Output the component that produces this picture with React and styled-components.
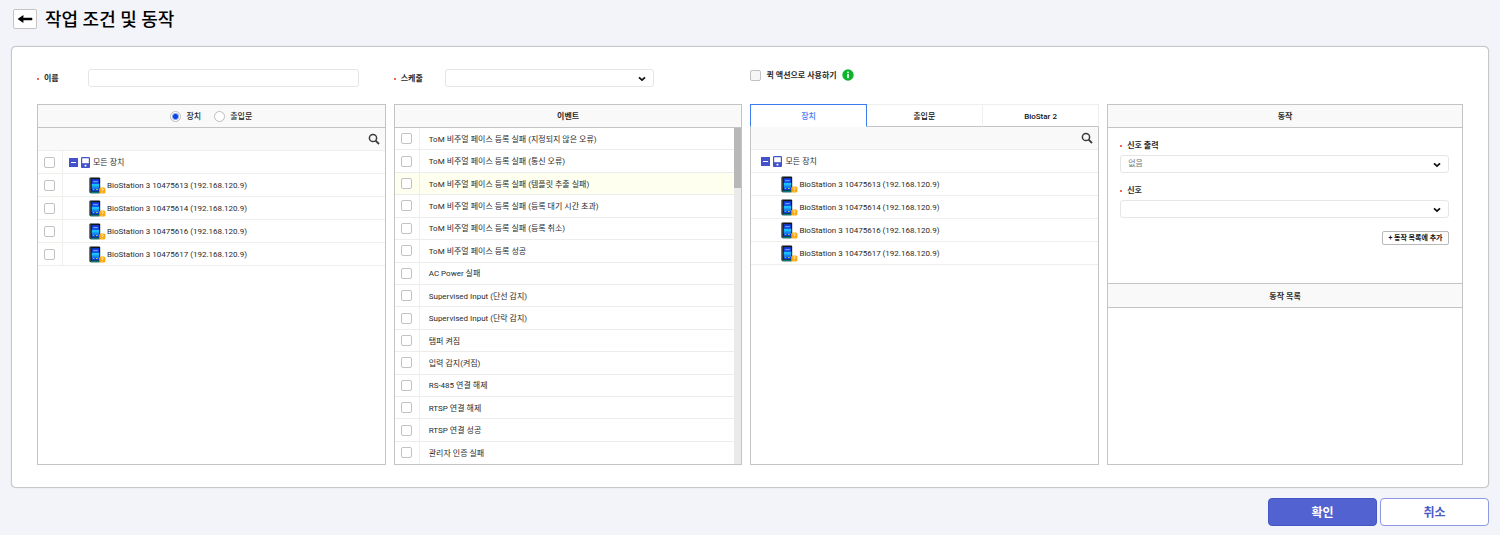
import React, { useState } from "react";
import styled, { createGlobalStyle, css } from "styled-components";

const line = "#c4c4c4";
const soft = "#eeeeea";
const blue = "#4d5ecf";

const GlobalStyle = createGlobalStyle`
  * { box-sizing: border-box; }
  body { margin: 0; background: #f3f4f9; color: #2a2a2a; }
  body, button, input, select {
    font-family: Roboto, "Noto Sans CJK KR", sans-serif;
    font-size: 8px;
    line-height: 12px;
  }
`;

const Page = styled.div`
  min-height: 100vh;
  display: flex;
  flex-direction: column;
  padding: 8px 11px 9px;
`;

const Header = styled.header`
  display: flex;
  align-items: center;
  gap: 8px;
  height: 21px;
  padding-left: 2px;
`;

const BackButton = styled.button`
  display: grid;
  place-items: center;
  width: 24px;
  height: 20px;
  padding: 0;
  border: 1px solid #c4c4c4;
  border-radius: 2px;
  background: #fff;
`;

const Title = styled.h1`
  margin: 0;
  padding-top: 2px;
  font-size: 18px;
  line-height: 24px;
  font-weight: 500;
  color: #000;
`;

const Card = styled.main`
  flex: 1;
  display: flex;
  flex-direction: column;
  gap: 17px;
  margin-top: 17px;
  padding: 22px 25px 22px;
  background: #fff;
  border: 1px solid #c8c8ca;
  border-radius: 5px;
  box-shadow: 0 0 1px #b4b4b6;
`;

const columns = css`
  display: grid;
  grid-template-columns: repeat(3, minmax(0, 49fr)) minmax(0, 50fr);
  column-gap: 8px;
`;

const FormRow = styled.div`
  ${columns}
`;

const Panels = styled.div`
  ${columns}
  flex: 1;
`;

const Field = styled.div`
  display: grid;
  grid-template-columns: 51px minmax(0, 1fr);
  align-items: center;
  padding-right: ${(p) => p.$end}px;
`;

const Label = styled.label`
  display: flex;
  align-items: center;
  gap: 5px;
  padding-top: 2px;
  font-weight: 700;

  &::before {
    content: "";
    width: 2px;
    height: 2px;
    border-radius: 1px;
    background: #f4301f;
  }
`;

const TextInput = styled.input`
  width: 100%;
  height: 18px;
  padding: 0 8px;
  border: 1px solid #e6e6e6;
  border-radius: 3px;
`;

const SelectWrap = styled.div`
  position: relative;
  height: 18px;

  svg {
    position: absolute;
    right: 8px;
    top: 6px;
    pointer-events: none;
  }
`;

const Select = styled.select`
  display: block;
  appearance: none;
  width: 100%;
  height: 18px;
  padding: 0 7px;
  border: 1px solid #e6e6e6;
  border-radius: 3px;
  background: #fff;
  color: #777;
`;

const QuickAction = styled.div`
  display: flex;
  align-items: center;
  align-self: start;
  gap: 5px;
  height: 12px;
  font-weight: 700;
`;

const CheckBox = styled.input.attrs({ type: "checkbox" })`
  appearance: none;
  flex: none;
  width: 11px;
  height: 11px;
  margin: 0;
  border: 1px solid #c2c2c2;
  border-radius: 2px;
  background: ${(p) => (p.$muted ? "#f6f6f6" : "#fff")};

  &:checked { background: ${blue}; }
`;

const Panel = styled.section`
  display: flex;
  flex-direction: column;
  min-width: 0;
  border: 1px solid ${line};
`;

const PanelHead = styled.h2`
  display: flex;
  align-items: center;
  justify-content: center;
  height: 23px;
  margin: 0;
  padding-top: 2px;
  background: #f9f9f9;
  border-bottom: 1px solid ${line};
  font-size: 8px;
  line-height: 12px;
  font-weight: 700;
`;

const RadioGroup = styled.div`
  display: flex;
  align-items: center;
  justify-content: center;
  gap: 13px;
  height: 23px;
  background: #f9f9f9;
  border-bottom: 1px solid ${line};
`;

const RadioLabel = styled.label`
  display: flex;
  align-items: center;
  gap: 5px;
  font-weight: 500;
`;

const Name = styled.span`
  padding-top: 2px;
`;

const Radio = styled.input.attrs({ type: "radio" })`
  appearance: none;
  width: 11px;
  height: 11px;
  margin: 0;
  border: 1px solid #bdbdbd;
  border-radius: 50%;
  background: #fff;

  &:checked {
    background: radial-gradient(circle, #0a45e0 0 2px, #fff 4px);
  }
`;

const SearchBar = styled.div`
  display: flex;
  align-items: center;
  justify-content: flex-end;
  height: 23px;
  padding-right: 5px;
  background: #f9f9f9;
  border-bottom: 1px solid ${soft};
`;

const IconButton = styled.button`
  display: grid;
  place-items: center;
  width: 12px;
  height: 12px;
  padding: 0;
  border: 0;
  background: none;
`;

const List = styled.ul`
  margin: 0;
  padding: 0;
  list-style: none;
`;

const TreeRow = styled.li`
  display: flex;
  height: 23px;
  border-bottom: 1px solid ${soft};
`;

const CheckCell = styled.div`
  display: grid;
  place-items: center;
  flex: none;
  width: 25px;
  padding-right: ${(p) => (p.$tree ? 2 : 0)}px;
  border-right: 1px solid ${soft};
`;

const TreeLabel = styled.label`
  display: flex;
  align-items: center;
  gap: ${(p) => (p.$child ? 1 : 3)}px;
  padding-left: ${(p) => (p.$child ? 26 : 6)}px;
`;

const TreeBody = styled.div`
  display: flex;
  padding-left: ${(p) => (p.$flush ? 4 : 0)}px;
`;

const EventBody = styled.div`
  flex: 1;
  display: flex;
`;

const EventList = styled(List)`
  flex: 1;
  display: flex;
  flex-direction: column;
`;

const EventRow = styled.li`
  flex: 1;
  display: flex;
  min-height: 22px;
  background: ${(p) => (p.$active ? "#fffff0" : "#fff")};
  border-bottom: 1px solid #ececec;

  &:last-child { border-bottom: 0; }
`;

const EventLabel = styled.label`
  display: flex;
  align-items: center;
  padding-left: 9px;
`;

const ScrollTrack = styled.div`
  width: 7px;
  background: #ebe9e9;
`;

const ScrollThumb = styled.div`
  height: 60px;
  background: #b8b8b8;
`;

const TabPanel = styled.section`
  display: flex;
  flex-direction: column;
  min-width: 0;
`;

const Tabs = styled.div`
  display: grid;
  grid-template-columns: repeat(3, 1fr);
  height: 23px;
`;

const Tab = styled.button`
  padding: 2px 0 0;
  font-weight: 500;
  color: #111;
  background: #fff;
  border: 1px solid #eee;
  border-left: 0;
  border-bottom-color: ${line};

  &[aria-selected="true"] {
    color: #3c7cf0;
    border: 1px solid #3c7cf0;
    border-bottom-color: #fff;
  }
`;

const TabContent = styled.div`
  flex: 1;
  border: 1px solid ${line};
  border-top: 0;
`;

const ActionForm = styled.div`
  display: flex;
  flex-direction: column;
  height: 155px;
  padding: 10px 13px 10px 12px;
`;

const StackedField = styled.div`
  display: flex;
  flex-direction: column;
  gap: 3px;
  margin-bottom: 10px;
`;

const AddButton = styled.button`
  align-self: flex-end;
  width: 67px;
  height: 14px;
  margin-top: 3px;
  padding: 0;
  border: 1px solid #b9b9b9;
  border-radius: 2px;
  background: #fff;
  color: #111;
  font-size: 7px;
  line-height: 12px;
  font-weight: 700;
  white-space: nowrap;
`;

const ActionList = styled.div`
  flex: 1;
`;

const ListHead = styled(PanelHead)`
  height: 25px;
  border-top: 1px solid ${line};
`;

const Footer = styled.footer`
  display: flex;
  justify-content: flex-end;
  gap: 3px;
  margin-top: 10px;
`;

const FooterButton = styled.button`
  width: 109px;
  height: 28px;
  padding: 2px 0 0;
  border: 1px solid ${(p) => (p.$primary ? "#4655c4" : "#8c98e2")};
  border-radius: 4px;
  background: ${(p) => (p.$primary ? "#5262d0" : "#fff")};
  color: ${(p) => (p.$primary ? "#fff" : "#4a59c8")};
  font-size: 12px;
  line-height: 16px;
  font-weight: 700;
`;

const BackIcon = () => (
  <svg width="16" height="10" viewBox="0 0 16 10" aria-hidden="true">
    <path d="M6.4 1 L0.6 5 L6.4 9 V6.2 H14.4 Q15.4 6.2 15.4 5 Q15.4 3.8 14.4 3.8 H6.4 Z" fill="#000" />
  </svg>
);

const Chevron = () => (
  <svg width="8" height="8" viewBox="0 0 8 8" aria-hidden="true">
    <path d="M1 2.3 L4 5.1 L7 2.3" fill="none" stroke="#111" strokeWidth="1.8" />
  </svg>
);

const SearchIcon = () => (
  <svg width="12" height="12" viewBox="0 0 12 12" aria-hidden="true">
    <circle cx="5" cy="5" r="3.6" fill="none" stroke="#3c3c3c" strokeWidth="1.5" />
    <path d="M7.6 7.6 L11 11" stroke="#3c3c3c" strokeWidth="1.8" />
  </svg>
);

const InfoIcon = () => (
  <svg width="12" height="12" viewBox="0 0 12 12" role="img" aria-label="정보">
    <circle cx="6" cy="6" r="5.7" fill="#0cb52c" />
    <circle cx="6" cy="3.3" r="0.9" fill="#fff" />
    <rect x="5.2" y="4.9" width="1.6" height="4.3" fill="#fff" />
  </svg>
);

const CollapseIcon = () => (
  <svg width="9" height="9" viewBox="0 0 9 9" aria-hidden="true">
    <rect width="9" height="9" fill="#4453cb" />
    <rect x="2" y="4" width="5" height="1" fill="#fff" />
  </svg>
);

const GroupIcon = () => (
  <svg width="9" height="11" viewBox="0 0 9 11" aria-hidden="true">
    <rect x="0.6" y="0.6" width="7.8" height="9.8" rx="0.6" fill="#fff" stroke="#4453cb" strokeWidth="1.2" />
    <rect x="0.5" y="6.2" width="8" height="4.3" fill="#4453cb" />
    <rect x="3.6" y="7.8" width="1.8" height="1.7" fill="#fff" />
  </svg>
);

const DeviceIcon = () => (
  <svg width="17" height="17" viewBox="0 0 17 17" aria-hidden="true">
    <rect x="0.6" y="0.4" width="10.6" height="15.8" rx="1.2" fill="#101418" />
    <rect x="0.6" y="0.8" width="1.6" height="15" rx="0.8" fill="#3a3f44" />
    <rect x="2.8" y="2.2" width="7.4" height="12" fill="#1240e0" />
    <rect x="2.8" y="6.8" width="7.4" height="3" fill="#18c0f8" />
    <rect x="2.8" y="9.8" width="7.4" height="2" fill="#1a86f0" />
    <rect x="4.2" y="4" width="4.6" height="1.2" fill="#6e9cf6" />
    <rect x="3.8" y="12" width="1.4" height="1" fill="#36e0d0" />
    <rect x="7.2" y="12" width="1.4" height="1" fill="#c8e84a" />
    <rect x="1.6" y="14.6" width="9" height="1.6" fill="#0c7a7a" />
    <rect x="10.2" y="10.4" width="6.2" height="6.2" rx="1.6" fill="#fba80c" />
    <path d="M12 12.3 Q13.2 11.1 14.2 12.1 Q14.6 13 13.2 13.7 V14.2 M13.2 14.9 V15.6" fill="none" stroke="#fff" strokeOpacity="0.85" strokeWidth="0.8" />
  </svg>
);

const devices = ["10475613", "10475614", "10475616", "10475617"].map(
  (id) => `BioStation 3 ${id} (192.168.120.9)`
);

const events = [
  "ToM 비주얼 페이스 등록 실패 (지정되지 않은 오류)",
  "ToM 비주얼 페이스 등록 실패 (통신 오류)",
  "ToM 비주얼 페이스 등록 실패 (템플릿 추출 실패)",
  "ToM 비주얼 페이스 등록 실패 (등록 대기 시간 초과)",
  "ToM 비주얼 페이스 등록 실패 (등록 취소)",
  "ToM 비주얼 페이스 등록 성공",
  "AC Power 실패",
  "Supervised Input (단선 감지)",
  "Supervised Input (단락 감지)",
  "탬퍼 켜짐",
  "입력 감지(켜짐)",
  "RS-485 연결 해제",
  "RTSP 연결 해제",
  "RTSP 연결 성공",
  "관리자 인증 실패",
];

const tabs = ["장치", "출입문", "BioStar 2"];

function DeviceTree({ checkable }) {
  return (
    <>
      <SearchBar>
        <IconButton type="button" aria-label="검색"><SearchIcon /></IconButton>
      </SearchBar>
      <List>
        {["모든 장치", ...devices].map((name, i) => (
          <TreeRow key={name}>
            {checkable && <CheckCell $tree><CheckBox id={`device-${i}`} /></CheckCell>}
            <TreeBody $flush={!checkable}>
              <TreeLabel
                $child={i > 0}
                as={checkable ? "label" : "span"}
                htmlFor={checkable ? `device-${i}` : undefined}
              >
                {i === 0 ? <><CollapseIcon /><GroupIcon /></> : <DeviceIcon />}
                <Name>{name}</Name>
              </TreeLabel>
            </TreeBody>
          </TreeRow>
        ))}
      </List>
    </>
  );
}

function SelectBox({ id, options }) {
  return (
    <SelectWrap>
      <Select id={id}>
        {options.map((o) => <option key={o}>{o}</option>)}
      </Select>
      <Chevron />
    </SelectWrap>
  );
}

export default function App() {
  const [tab, setTab] = useState(tabs[0]);
  return (
    <>
      <GlobalStyle />
      <Page>
        <Header>
          <BackButton type="button" aria-label="뒤로"><BackIcon /></BackButton>
          <Title>작업 조건 및 동작</Title>
        </Header>
        <Card>
          <FormRow>
            <Field $end={27}>
              <Label htmlFor="name">이름</Label>
              <TextInput id="name" type="text" />
            </Field>
            <Field $end={88}>
              <Label htmlFor="schedule">스케줄</Label>
              <SelectBox id="schedule" options={[""]} />
            </Field>
            <QuickAction>
              <CheckBox id="quick" $muted />
              <Name as="label" htmlFor="quick">퀵 액션으로 사용하기</Name>
              <InfoIcon />
            </QuickAction>
          </FormRow>
          <Panels>
            <Panel>
              <RadioGroup role="radiogroup" aria-label="대상">
                <RadioLabel><Radio name="kind" defaultChecked /><Name>장치</Name></RadioLabel>
                <RadioLabel><Radio name="kind" /><Name>출입문</Name></RadioLabel>
              </RadioGroup>
              <DeviceTree checkable />
            </Panel>
            <Panel>
              <PanelHead>이벤트</PanelHead>
              <EventBody>
                <EventList>
                  {events.map((name, i) => (
                    <EventRow key={name} $active={i === 2}>
                      <CheckCell><CheckBox id={`event-${i}`} /></CheckCell>
                      <EventLabel htmlFor={`event-${i}`}><Name>{name}</Name></EventLabel>
                    </EventRow>
                  ))}
                </EventList>
                <ScrollTrack aria-hidden="true"><ScrollThumb /></ScrollTrack>
              </EventBody>
            </Panel>
            <TabPanel>
              <Tabs role="tablist">
                {tabs.map((t) => (
                  <Tab key={t} type="button" role="tab" aria-selected={t === tab} onClick={() => setTab(t)}>{t}</Tab>
                ))}
              </Tabs>
              <TabContent role="tabpanel"><DeviceTree /></TabContent>
            </TabPanel>
            <Panel>
              <PanelHead>동작</PanelHead>
              <ActionForm>
                <StackedField>
                  <Label htmlFor="output">신호 출력</Label>
                  <SelectBox id="output" options={["없음"]} />
                </StackedField>
                <StackedField>
                  <Label htmlFor="signal">신호</Label>
                  <SelectBox id="signal" options={[""]} />
                </StackedField>
                <AddButton type="button">+ 동작 목록에 추가</AddButton>
              </ActionForm>
              <ListHead>동작 목록</ListHead>
              <ActionList />
            </Panel>
          </Panels>
        </Card>
        <Footer>
          <FooterButton type="button" $primary>확인</FooterButton>
          <FooterButton type="button">취소</FooterButton>
        </Footer>
      </Page>
    </>
  );
}
